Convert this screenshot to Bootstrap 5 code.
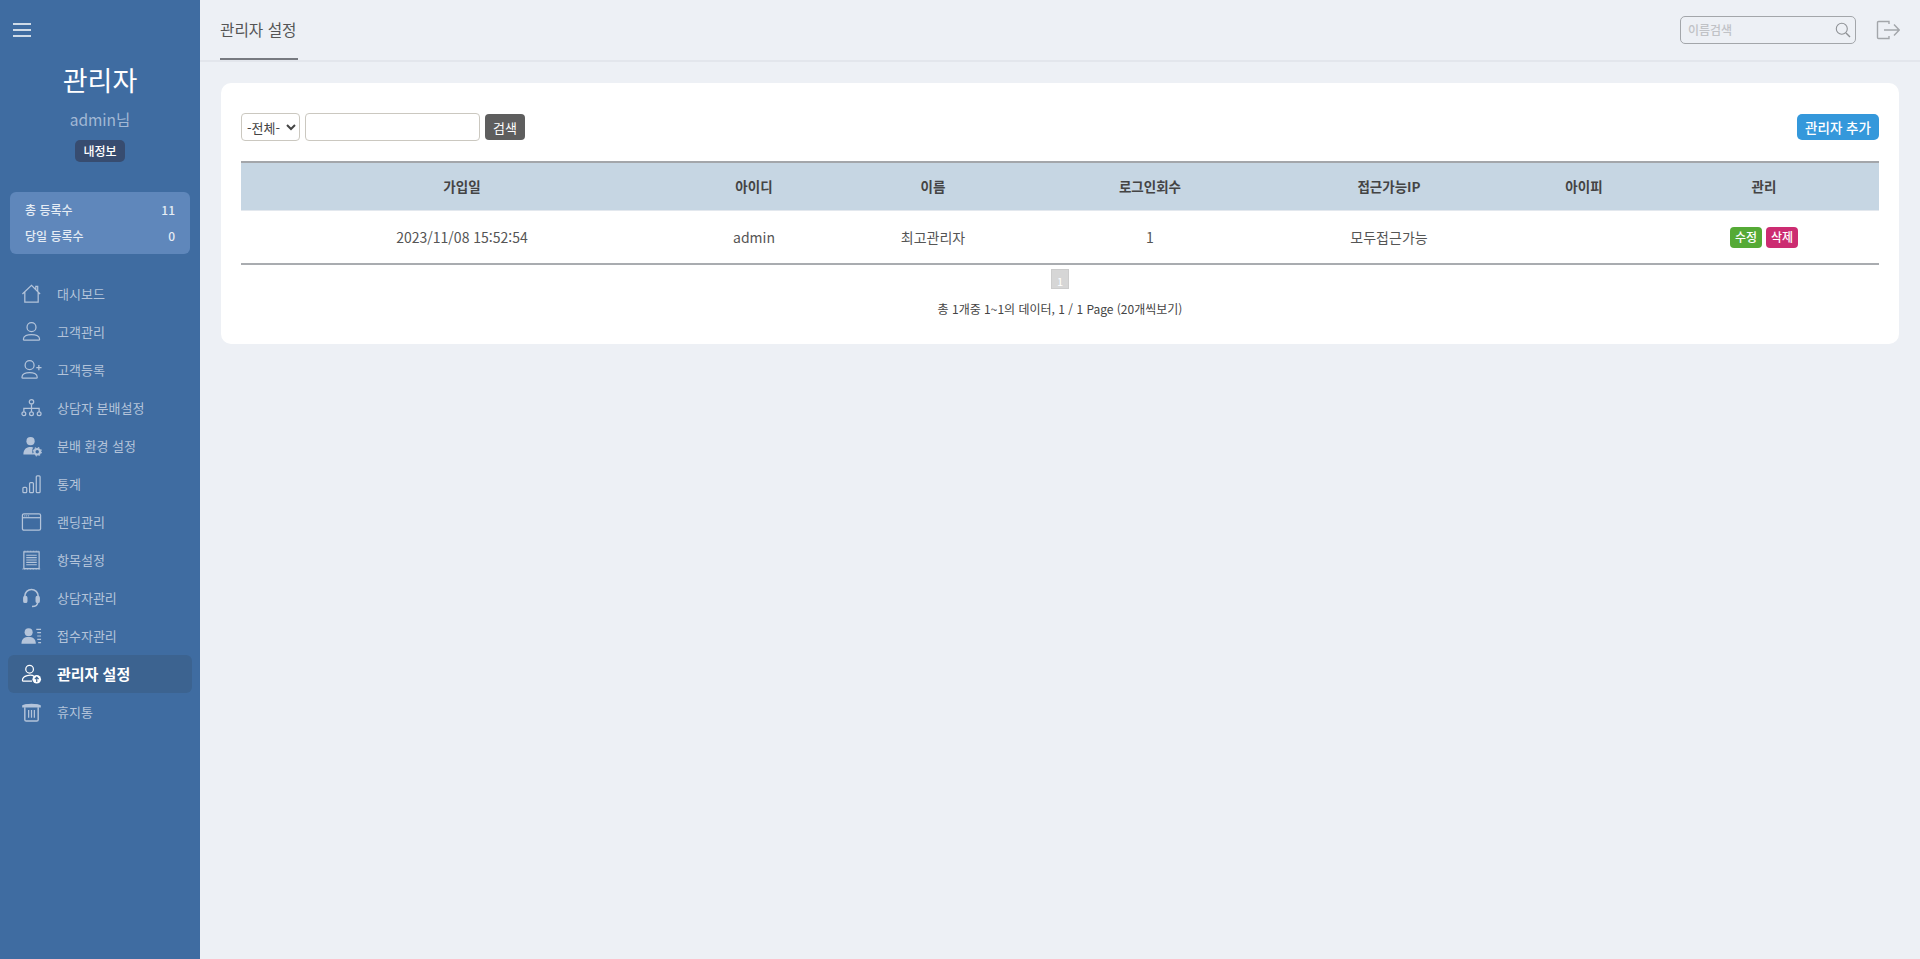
<!DOCTYPE html>
<html lang="ko">
<head>
<meta charset="UTF-8">
<title>관리자 설정</title>
<link rel="stylesheet" href="https://cdn.jsdelivr.net/npm/bootstrap@5.3.0/dist/css/bootstrap.min.css">
<style>
html, body { height: 100%; }
body { font-family: "Noto Sans CJK KR", "Noto Sans", sans-serif; background: #edf0f5; color: #444; font-size: 13px; overflow: hidden; }
.side-wrap { width: 200px; height: 959px; background: #3f6ca1; flex-shrink: 0; }
.ham-btn { padding: 23px 0 0 13px; height: 54px; }
.side-name { font-size: 27px; line-height: 40px; color: #fff; margin-top: 6px; }
.side-id { font-size: 15.5px; line-height: 22px; color: #a3b9d5; margin-top: 8px; }
.my-btn { width: 50px; height: 22px; line-height: 21px; background: #374c70; color: #fff; font-size: 12px; border-radius: 5px; margin-top: 10px; font-weight: 500; }
.stat-box { margin: 30px 10px 0; height: 62px; background: #5f87bb; border-radius: 6px; padding: 5px 15px; color: #e6edf5; font-size: 12px; font-weight: 500; }
.stat-row { height: 26px; line-height: 26px; }
.menu-list { margin-top: 21px; padding: 0 8px; }
.menu-item { height: 38px; padding-left: 13px; color: #b4c4da; font-size: 13px; border-radius: 6px; text-decoration: none; }
.menu-item svg { width: 21px; height: 22px; margin-right: 15px; flex-shrink: 0; }
.menu-item.on { background: #3c6390; color: #fff; font-size: 15px; font-weight: 700; }
.top-wrap { height: 62px; border-bottom: 2px solid #e3e6ec; padding: 0 20px; }
.top-title { font-size: 15.7px; line-height: 59px; height: 60px; padding: 0 1px 0 0; color: #555; border-bottom: 2px solid #777a80; }
.top-search { width: 176px; height: 28px; border: 1px solid #a3a6aa; border-radius: 5px; padding: 0 4px 0 7px; color: #c0c2c6; font-size: 12px; font-weight: 500; }
.out-icon { margin-left: 20px; }
.main-box { margin: 21px 21px 0 21px; height: 261px; background: #fff; border-radius: 10px; padding: 30px 20px 0; }
.form-gap { gap: 5px; }
.sel-kind { width: 59px; height: 28px; border: 1px solid #cbc8c0; border-radius: 4px; background: #fff; font-size: 13px; color: #444; padding: 0 0 0 1px; font-family: inherit; }
.txt-kw { width: 175px; height: 28px; border: 1px solid #cbc8c0; border-radius: 4px; background: #fff; }
.btn-kw { width: 40px; height: 26px; line-height: 25px; background: #5e5e5e; color: #fff; border-radius: 4px; font-size: 13px; border: 0; padding: 0; }
.btn-add { width: 82px; height: 26px; line-height: 25px; background: #3498db; color: #fff; border-radius: 5px; font-size: 13.5px; font-weight: 500; border: 0; padding: 0; }
.adm-table { table-layout: fixed; width: 100%; margin-top: 20px; border-collapse: collapse; }
.adm-table th { background: #c6d6e3; height: 48px; border-top: 2px solid #a3a6aa; text-align: center; font-size: 13.5px; font-weight: 700; color: #444; border-bottom: 1px solid #e3e8ee; }
.adm-table td { height: 54px; text-align: center; font-size: 14px; color: #555; border-bottom: 2px solid #a9acb0; padding: 1px 0 0; }
.c1 { width: 442px; } .c2 { width: 142px; } .c3 { width: 216px; } .c4 { width: 218px; }
.c5 { width: 260px; } .c6 { width: 130px; } .c7 { width: 230px; }
.tag-btn { display: inline-block; width: 32px; height: 21px; line-height: 20px; color: #fff; font-size: 12px; border-radius: 4px; font-weight: 500; }
.tag-green { background: #55aa36; }
.tag-pink { background: #cc2c71; margin-left: 4px; }
.page-num { width: 18px; height: 20px; line-height: 22px; background: #d6d6d6; border: 1px solid #ccc; color: #fff; font-size: 11px; margin: 4px auto 0; text-align: center; }
.page-info { font-size: 12px; line-height: 18px; color: #444; margin-top: 11px; }
</style>
</head>
<body>
<div class="d-flex">
  <aside class="side-wrap">
    <div class="ham-btn">
      <svg width="18" height="14" viewBox="0 0 18 14" class="d-block"><path d="M0 1h18M0 7h18M0 13h18" stroke="#fff" stroke-width="1.6"/></svg>
    </div>
    <div class="text-center">
      <div class="side-name">관리자</div>
      <div class="side-id">admin님</div>
      <div class="my-btn mx-auto">내정보</div>
    </div>
    <div class="stat-box">
      <div class="stat-row d-flex justify-content-between"><span>총 등록수</span><span>11</span></div>
      <div class="stat-row d-flex justify-content-between"><span>당일 등록수</span><span>0</span></div>
    </div>
    <nav class="menu-list">
      <a class="menu-item d-flex align-items-center"><svg viewBox="0 0 22 22" fill="none" stroke="#b4c4da" stroke-width="1.3"><path d="M1.5 11 11 2l9 9M4 9v10.5h14V9M15.500 6V3h2v5"/></svg>대시보드</a>
      <a class="menu-item d-flex align-items-center"><svg viewBox="0 0 22 22" fill="none" stroke="#b4c4da" stroke-width="1.3"><circle cx="11" cy="6" r="4.700"/><path d="M2.500 18.500c0-6.500 17-6.500 17 0 0 .7-.5 1-1 1h-15c-.5 0-1-.3-1-1z"/></svg>고객관리</a>
      <a class="menu-item d-flex align-items-center"><svg viewBox="0 0 22 22" fill="none" stroke="#b4c4da" stroke-width="1.3"><circle cx="9" cy="6" r="4.700"/><path d="M1 18.500c0-6.500 16-6.500 16 0 0 .7-.5 1-1 1H2c-.5 0-1-.3-1-1zM16 8.500h5.500M18.700 5.800v5.400"/></svg>고객등록</a>
      <a class="menu-item d-flex align-items-center"><svg viewBox="0 0 22 22" fill="none" stroke="#b4c4da" stroke-width="1.3"><circle cx="11" cy="4.500" r="2.300"/><circle cx="3" cy="17" r="2"/><circle cx="11" cy="17" r="2"/><circle cx="19" cy="17" r="2"/><path d="M11 7v8M3 15v-3.500h16V15"/></svg>상담자 분배설정</a>
      <a class="menu-item d-flex align-items-center"><svg viewBox="0 0 22 22"><circle cx="10" cy="6" r="4.300" fill="#b4c4da"/><path d="M2.500 20c0-5.500 3-8 7.500-8 1.500 0 2.500.3 3 .7-1.800 2-1.800 5 0 7.300z" fill="#b4c4da"/><circle cx="17" cy="17" r="2.900" fill="none" stroke="#b4c4da" stroke-width="2.200"/><circle cx="17" cy="17" r="4.300" fill="none" stroke="#b4c4da" stroke-width="1.200" stroke-dasharray="1.600 1.800"/></svg>분배 환경 설정</a>
      <a class="menu-item d-flex align-items-center"><svg viewBox="0 0 22 22" fill="none" stroke="#b4c4da" stroke-width="1.3"><rect x="2" y="14.500" width="4" height="5.500" rx="1"/><rect x="9" y="9.500" width="4" height="10.500" rx="1"/><rect x="16" y="2.500" width="4" height="17.500" rx="1"/></svg>통계</a>
      <a class="menu-item d-flex align-items-center"><svg viewBox="0 0 22 22" fill="none" stroke="#b4c4da" stroke-width="1.300"><rect x="1.500" y="2.500" width="19" height="17" rx="1.500"/><path d="M1.500 6.500h19"/><path d="M3.500 4.500h5" stroke-dasharray="1 1"/></svg>랜딩관리</a>
      <a class="menu-item d-flex align-items-center"><svg viewBox="0 0 22 22" fill="none" stroke="#b4c4da" stroke-width="1.300"><rect x="3" y="2.500" width="16" height="17.500"/><path d="M1.500 20.500h19M3 1.800h16" stroke-width="1" stroke-dasharray="1 .6"/><path d="M5.500 6h11M5.500 8.500h11M5.500 11h11M5.500 13.500h11M5.500 16h11" stroke-width="1.100"/></svg>항목설정</a>
      <a class="menu-item d-flex align-items-center"><svg viewBox="0 0 22 22" fill="none" stroke="#b4c4da" stroke-width="1.600"><path d="M4 11V9a7 7 0 0 1 14 0v2"/><rect x="3" y="9.500" width="3" height="6" rx="1.200" fill="#b4c4da"/><rect x="16" y="9.500" width="3" height="6" rx="1.200" fill="#b4c4da"/><path d="M17.500 15.500c0 3-2 4.500-6 4.500"/></svg>상담자관리</a>
      <a class="menu-item d-flex align-items-center"><svg viewBox="0 0 22 22"><circle cx="8" cy="7" r="4.200" fill="#b4c4da"/><path d="M0.500 19c0-5 3-7 7.500-7s7.500 2 7.500 7z" fill="#b4c4da"/><path d="M16 4h5M17 7.500h4M17 11h4M17 14.500h4M18 18h3" stroke="#b4c4da" stroke-width="1.200"/></svg>접수자관리</a>
      <a class="menu-item on d-flex align-items-center"><svg viewBox="0 0 22 22"><g fill="none" stroke="#fff" stroke-width="1.300"><circle cx="9" cy="6" r="4"/><path d="M11.500 18.500H2.500c-.6 0-1-.4-1-1 0-5 9-6.500 12.500-4"/></g><circle cx="16.500" cy="16.500" r="4.500" fill="#fff"/><path d="M16.500 19.500v-5M14.500 16.300l2-2 2 2" fill="none" stroke="#3c6390" stroke-width="1.200"/></svg>관리자 설정</a>
      <a class="menu-item d-flex align-items-center"><svg viewBox="0 0 22 22" fill="none" stroke="#b4c4da" stroke-width="1.500"><path d="M4 6v13c0 1 .6 1.500 1.500 1.500h11c.9 0 1.500-.5 1.500-1.500V6"/><path d="M2 4.500c2-2 16-2 18 0v1H2z" fill="#b4c4da"/><path d="M8 9v8M11 9v8M14 9v8" stroke-width="1.300"/></svg>휴지통</a>
    </nav>
  </aside>
  <div class="flex-grow-1">
    <header class="top-wrap d-flex justify-content-between align-items-start">
      <div class="top-title">관리자 설정</div>
      <div class="d-flex align-items-center mt-3">
        <div class="top-search d-flex justify-content-between align-items-center">
          <span>이름검색</span>
          <svg width="16" height="16" viewBox="0 0 16 16" fill="none" stroke="#8f9296" stroke-width="1.100"><circle cx="6.800" cy="6.800" r="5.500"/><path d="m11 11 4 4" stroke-width="1.500"/></svg>
        </div>
        <svg class="out-icon" width="24" height="20" viewBox="0 0 24 20" fill="none" stroke="#a3a6aa" stroke-width="1.400"><path d="M13 4V1.500H2.500a1 1 0 0 0-1 1v15a1 1 0 0 0 1 1H13V16"/><path d="M8 10h15M18 4.500l5.200 5.500-5.200 5.500"/></svg>
      </div>
    </header>
    <main class="main-box">
      <div class="d-flex justify-content-between align-items-center">
        <form class="d-flex align-items-center m-0 form-gap">
          <select class="sel-kind"><option>-전체-</option></select>
          <input class="txt-kw" type="text">
          <button type="button" class="btn-kw">검색</button>
        </form>
        <button type="button" class="btn-add">관리자 추가</button>
      </div>
      <table class="adm-table">
        <colgroup>
          <col class="c1"><col class="c2"><col class="c3"><col class="c4"><col class="c5"><col class="c6"><col class="c7">
        </colgroup>
        <thead>
          <tr><th>가입일</th><th>아이디</th><th>이름</th><th>로그인회수</th><th>접근가능IP</th><th>아이피</th><th>관리</th></tr>
        </thead>
        <tbody>
          <tr>
            <td>2023/11/08 15:52:54</td><td>admin</td><td>최고관리자</td><td>1</td><td>모두접근가능</td><td></td>
            <td><span class="tag-btn tag-green">수정</span><span class="tag-btn tag-pink">삭제</span></td>
          </tr>
        </tbody>
      </table>
      <div class="page-num">1</div>
      <div class="page-info text-center">총 1개중 1~1의 데이터, 1 / 1 Page (20개씩보기)</div>
    </main>
  </div>
</div>
<script src="https://cdn.jsdelivr.net/npm/bootstrap@5.3.0/dist/js/bootstrap.bundle.min.js"></script>
</body>
</html>
